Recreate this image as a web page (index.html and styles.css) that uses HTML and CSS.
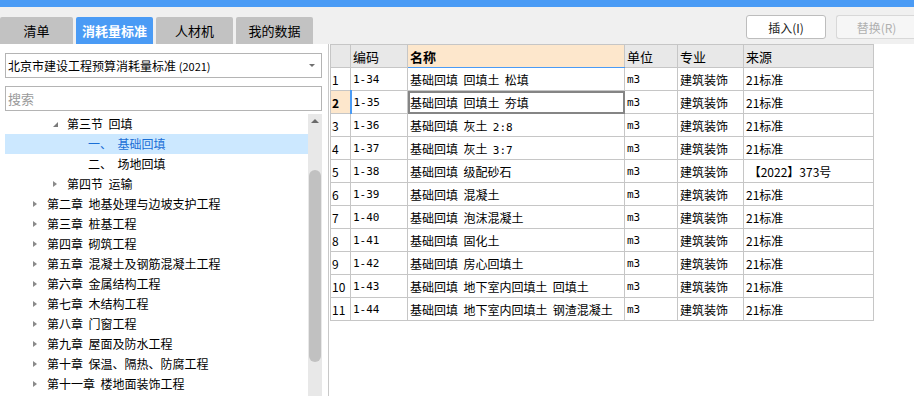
FILE: index.html
```html
<!DOCTYPE html>
<html lang="zh-CN">
<head>
    <meta charset="UTF-8">
    <title>消耗量标准</title>
    <link rel="stylesheet" href="styles.css">
</head>
<body>
    <div class="topbar"></div>
    <div class="header">
        <div class="tabs">
            <div class="tab first">清单</div>
            <div class="tab active">消耗量标准</div>
            <div class="tab">人材机</div>
            <div class="tab">我的数据</div>
        </div>
        <div class="actions">
            <button class="btn">插入(I)</button>
            <button class="btn disabled">替换(R)</button>
        </div>
    </div>
    <div class="main">
        <div class="side">
            <div class="select">
                <span>北京市建设工程预算消耗量标准 <span class="small">(2021)</span></span>
                <span class="caret"></span>
            </div>
            <div class="search">搜索</div>
            <div class="tree-wrap">
                <div class="tree">
                    <div class="node lv1"><span class="tri open"></span>第三节&nbsp; 回填</div>
                    <div class="node lv2 selected">一、&nbsp; 基础回填</div>
                    <div class="node lv2">二、&nbsp; 场地回填</div>
                    <div class="node lv1"><span class="tri"></span>第四节&nbsp; 运输</div>
                    <div class="node lv0"><span class="tri"></span>第二章&nbsp; 地基处理与边坡支护工程</div>
                    <div class="node lv0"><span class="tri"></span>第三章&nbsp; 桩基工程</div>
                    <div class="node lv0"><span class="tri"></span>第四章&nbsp; 砌筑工程</div>
                    <div class="node lv0"><span class="tri"></span>第五章&nbsp; 混凝土及钢筋混凝土工程</div>
                    <div class="node lv0"><span class="tri"></span>第六章&nbsp; 金属结构工程</div>
                    <div class="node lv0"><span class="tri"></span>第七章&nbsp; 木结构工程</div>
                    <div class="node lv0"><span class="tri"></span>第八章&nbsp; 门窗工程</div>
                    <div class="node lv0"><span class="tri"></span>第九章&nbsp; 屋面及防水工程</div>
                    <div class="node lv0"><span class="tri"></span>第十章&nbsp; 保温、隔热、防腐工程</div>
                    <div class="node lv0"><span class="tri"></span>第十一章&nbsp; 楼地面装饰工程</div>
                </div>
                <div class="scrollbar">
                    <span class="arrow-up"></span>
                    <div class="thumb"></div>
                </div>
            </div>
        </div>
        <div class="content">
            <table class="grid">
                <colgroup>
                    <col style="width:20px">
                    <col style="width:57px">
                    <col style="width:217px">
                    <col style="width:53px">
                    <col style="width:66px">
                    <col style="width:130px">
                </colgroup>
                <thead>
                    <tr>
                        <th></th>
                        <th>编码</th>
                        <th class="sorted">名称</th>
                        <th>单位</th>
                        <th>专业</th>
                        <th>来源</th>
                    </tr>
                </thead>
                <tbody>
                    <tr><td class="num">1</td><td class="code">1-34</td><td>基础回填&nbsp; 回填土&nbsp; 松填</td><td class="code">m3</td><td>建筑装饰</td><td>21标准</td></tr>
                    <tr class="current"><td class="num">2</td><td class="code">1-35</td><td class="focus">基础回填&nbsp; 回填土&nbsp; 夯填</td><td class="code">m3</td><td>建筑装饰</td><td>21标准</td></tr>
                    <tr><td class="num">3</td><td class="code">1-36</td><td>基础回填&nbsp; 灰土&nbsp; <span class="code">2:8</span></td><td class="code">m3</td><td>建筑装饰</td><td>21标准</td></tr>
                    <tr><td class="num">4</td><td class="code">1-37</td><td>基础回填&nbsp; 灰土&nbsp; <span class="code">3:7</span></td><td class="code">m3</td><td>建筑装饰</td><td>21标准</td></tr>
                    <tr><td class="num">5</td><td class="code">1-38</td><td>基础回填&nbsp; 级配砂石</td><td class="code">m3</td><td>建筑装饰</td><td>&nbsp;【2022】373号</td></tr>
                    <tr><td class="num">6</td><td class="code">1-39</td><td>基础回填&nbsp; 混凝土</td><td class="code">m3</td><td>建筑装饰</td><td>21标准</td></tr>
                    <tr><td class="num">7</td><td class="code">1-40</td><td>基础回填&nbsp; 泡沫混凝土</td><td class="code">m3</td><td>建筑装饰</td><td>21标准</td></tr>
                    <tr><td class="num">8</td><td class="code">1-41</td><td>基础回填&nbsp; 固化土</td><td class="code">m3</td><td>建筑装饰</td><td>21标准</td></tr>
                    <tr><td class="num">9</td><td class="code">1-42</td><td>基础回填&nbsp; 房心回填土</td><td class="code">m3</td><td>建筑装饰</td><td>21标准</td></tr>
                    <tr><td class="num">10</td><td class="code">1-43</td><td>基础回填&nbsp; 地下室内回填土&nbsp; 回填土</td><td class="code">m3</td><td>建筑装饰</td><td>21标准</td></tr>
                    <tr><td class="num">11</td><td class="code">1-44</td><td>基础回填&nbsp; 地下室内回填土&nbsp; 钢渣混凝土</td><td class="code">m3</td><td>建筑装饰</td><td>21标准</td></tr>
                </tbody>
            </table>
        </div>
    </div>
</body>
</html>
```

FILE: styles.css
```css
body {
    margin: 0;
    padding: 0;
    font-family: "Noto Sans CJK SC", "Liberation Sans", sans-serif;
    font-size: 12px;
    color: #000;
    background-color: #f0f0f0;
    height: 396px;
    overflow: hidden;
}

.topbar {
    height: 7px;
    background-color: #4a9bf5;
}

.header {
    height: 37px;
    display: flex;
    justify-content: space-between;
}

.tabs {
    display: flex;
    align-items: flex-end;
    gap: 3px;
}

.tab {
    width: 77px;
    height: 27px;
    line-height: 27px;
    text-align: center;
    background-color: #c2c2c2;
    border-radius: 2px 2px 0 0;
    font-size: 13px;
}

.tab.first {
    width: 73px;
}

.tab.active {
    background-color: #4a9bf5;
    color: #fff;
    font-weight: bold;
}

.actions {
    display: flex;
    gap: 10px;
    padding-top: 8px;
    margin-right: -2px;
}

.btn {
    width: 80px;
    height: 24px;
    font-family: inherit;
    font-size: 12px;
    background-color: #fff;
    border: 1px solid #bdbdbd;
    border-radius: 3px;
    padding: 0;
    color: #222;
}

.btn.disabled {
    color: #b0b0b0;
    background-color: #f6f6f6;
    border-color: #d8d8d8;
    border-right: none;
    border-radius: 3px 0 0 3px;
}

.main {
    display: flex;
    height: 352px;
}

.side {
    width: 329px;
    background-color: #fff;
    border-right: 1px solid #c8c8c8;
    padding: 9px 6px 0 5px;
    box-sizing: border-box;
    display: flex;
    flex-direction: column;
}

.select {
    height: 25px;
    border: 1px solid #b4b4b4;
    box-sizing: border-box;
    display: flex;
    align-items: center;
    justify-content: space-between;
    padding: 0 6px 0 2px;
}

.select .small {
    font-size: 11px;
}

.caret {
    width: 0;
    height: 0;
    border-left: 3px solid transparent;
    border-right: 3px solid transparent;
    border-top: 3px solid #707070;
}

.search {
    height: 25px;
    margin-top: 8px;
    border: 1px solid #b4b4b4;
    box-sizing: border-box;
    line-height: 23px;
    padding-left: 2px;
    color: #9a9a9a;
    font-size: 13px;
}

.tree-wrap {
    display: flex;
    margin-top: 3px;
    flex: 1;
}

.tree {
    flex: 1;
}

.node {
    height: 20px;
    line-height: 20px;
    white-space: nowrap;
    position: relative;
}

.node.lv0 { padding-left: 42px; }
.node.lv1 { padding-left: 62px; }
.node.lv2 { padding-left: 83px; }

.node.selected {
    background-color: #cce8ff;
    color: #1a6fd6;
}

.tri {
    position: absolute;
    top: 7px;
    width: 0;
    height: 0;
    border-top: 3px solid transparent;
    border-bottom: 3px solid transparent;
    border-left: 4px solid #8a8a8a;
}

.lv0 .tri { left: 28px; }
.lv1 .tri { left: 48px; }

.tri.open {
    top: 8px;
    border-top: none;
    border-left: 5px solid transparent;
    border-bottom: 5px solid #7a7a7a;
}

.scrollbar {
    width: 14px;
    background-color: #e8e8e8;
    position: relative;
}

.arrow-up {
    position: absolute;
    left: 3px;
    top: 5px;
    width: 0;
    height: 0;
    border-left: 4px solid transparent;
    border-right: 4px solid transparent;
    border-bottom: 4px solid #6a6a6a;
}

.thumb {
    margin: 56px 1px 0;
    height: 192px;
    background-color: #c1c1c1;
    border-radius: 6px;
}

.content {
    flex: 1;
    background-color: #fff;
    padding-left: 1px;
}

.grid {
    border-collapse: collapse;
    table-layout: fixed;
    width: 543px;
    font-size: 12px;
}

.grid th,
.grid td {
    border: 1px solid #c6c6c6;
    height: 22px;
    padding: 0 2px;
    text-align: left;
    white-space: nowrap;
    overflow: hidden;
}

.grid th {
    background-color: #e8e8e8;
    font-weight: normal;
    font-size: 13px;
}

.grid th.sorted {
    background-color: #fde7cc;
    font-weight: bold;
    border-bottom: 1px solid #4a9bf5;
}

.grid td.code,
.grid .code {
    font-family: "DejaVu Sans Mono", "Liberation Mono", monospace;
    font-size: 11px;
}

.grid td.num {
    font-size: 12px;
    padding-left: 1px;
}

.current td.num {
    background-color: #fde7cc;
    font-weight: bold;
    border-right: 2px solid #4a9bf5;
}

.grid td.focus {
    outline: 2px solid #858585;
    outline-offset: -2px;
}
```
